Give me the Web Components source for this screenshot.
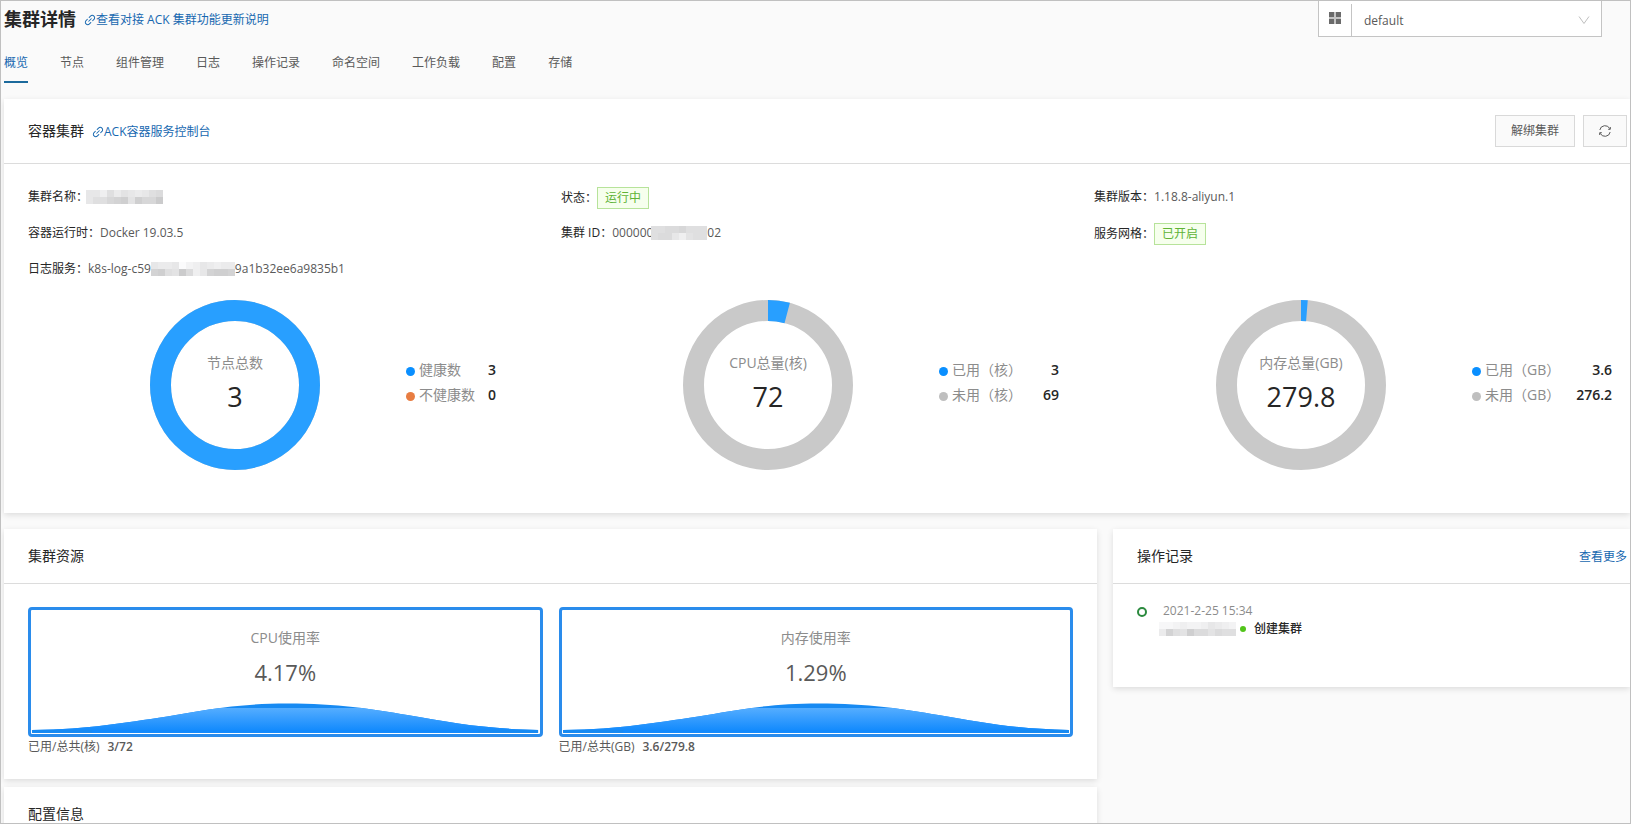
<!DOCTYPE html>
<html lang="zh-CN">
<head>
<meta charset="utf-8">
<title>集群详情</title>
<style>
  body {
    margin: 0;
    font-family: "Open Sans", "Noto Sans CJK SC", sans-serif;
    font-size: 12px;
    line-height: 20px;
    color: #595959;
    --ink: #262626;
    --link: #1768b0;
    --line: #dcdcdc;
    --blue: #289fff;
    --grey: #c9c9c9;
  }
</style>
</head>
<body>
<cluster-page></cluster-page>
<script>
const define = (name, css, html) => customElements.define(name, class extends HTMLElement {
  constructor() {
    super();
    this.attachShadow({ mode: 'open' });
  }
  connectedCallback() {
    const body = typeof html === 'function' ? html(this) : html;
    const template = document.createElement('template');
    template.innerHTML = `<style>*{box-sizing:border-box}${css}</style>${body}`;
    this.shadowRoot.replaceChildren(template.content.cloneNode(true));
  }
});

define('doc-link', `
  :host { display: inline-flex; padding-top: 2px; }
  a { display: inline-flex; align-items: center; color: var(--link); text-decoration: none; }
  svg { width: 12px; height: 12px; fill: currentColor; }
`, el => `
  <a href="#">${el.hasAttribute('plain') ? '' : `
    <svg viewBox="64 64 896 896" aria-hidden="true"><path d="M574 665.4a8.03 8.03 0 0 0-11.3 0L446.5 781.6c-53.8 53.8-144.6 59.5-204 0-59.5-59.5-53.8-150.2 0-204l116.2-116.2c3.1-3.1 3.1-8.2 0-11.3l-39.8-39.8a8.03 8.03 0 0 0-11.3 0L191.4 526.5c-84.6 84.6-84.6 221.5 0 306s221.5 84.6 306 0l116.2-116.2c3.1-3.1 3.1-8.2 0-11.3L574 665.4zm258.6-474c-84.6-84.6-221.5-84.6-306 0L410.3 307.6a8.03 8.03 0 0 0 0 11.3l39.7 39.7c3.1 3.1 8.2 3.1 11.3 0l116.2-116.2c53.8-53.8 144.6-59.5 204 0 59.5 59.5 53.8 150.2 0 204L665.3 562.6a8.03 8.03 0 0 0 0 11.3l39.8 39.8c3.1 3.1 8.2 3.1 11.3 0l116.2-116.2c84.5-84.6 84.5-221.5 0-306.1zM610.1 372.3a8.03 8.03 0 0 0-11.3 0L372.3 598.7a8.03 8.03 0 0 0 0 11.3l39.6 39.6c3.1 3.1 8.2 3.1 11.3 0l226.4-226.4c3.1-3.1 3.1-8.2 0-11.3l-39.5-39.6z"/></svg>`}<span><slot></slot></span></a>
`);

define('namespace-picker', `
  :host { display: flex; width: 284px; height: 36px; background: #fff; border: 1px solid #c4c4c4; border-top: 0; }
  label { display: flex; align-items: center; justify-content: center; width: 32px; padding-bottom: 1px; }
  label svg { width: 12px; height: 12px; fill: #6a6a6a; }
  .field { position: relative; flex: 1; margin-top: 3px; border-left: 1px solid #c4c4c4; }
  select { appearance: none; width: 100%; height: 100%; border: 0; padding: 2px 32px 0 12px; background: none; font: inherit; color: #595959; }
  .field svg { position: absolute; right: 11px; top: 10px; width: 12px; height: 12px; fill: none; stroke: #bfbfbf; pointer-events: none; }
`, `
  <label for="ns" aria-label="命名空间"><svg viewBox="0 0 12 12"><path d="M0 0h12v12H0z" fill="#c4c4c4"/><path d="M0 0h5v5H0zM7 0h5v5H7zM0 7h5v5H0zM7 7h5v5H7z"/></svg></label>
  <div class="field">
    <select id="ns"><option>default</option></select>
    <svg viewBox="0 0 12 12"><path d="M1 2.500 6 9.500 11 2.500"/></svg>
  </div>
`);

define('tab-bar', `
  :host { display: flex; gap: 32px; height: 40px; }
  a { line-height: 40px; color: inherit; text-decoration: none; }
  a.on { color: var(--link); box-shadow: inset 0 -2px #1c6a9c; }
`, el => el.getAttribute('tabs').split(' ')
  .map((t, i) => `<a href="#"${i ? '' : ' class="on" aria-current="page"'}>${t}</a>`).join(''));

define('panel-card', `
  :host { display: block; background: #fff; box-shadow: 0 2px 6px rgba(0,0,0,.12); }
  header { display: flex; align-items: center; gap: 8px; min-height: 54px; padding: 0 var(--pad-right, 24px) 0 24px; }
  :host([tall]) header { min-height: 64px; }
  h2 { margin: 0; font-size: 14px; font-weight: 400; color: var(--ink); }
  .extra { display: flex; gap: 8px; margin-left: auto; }
  .body { padding: 0 var(--pad-right, 24px) 0 24px; border-top: 1px solid var(--line); }
`, el => `
  <header><h2>${el.getAttribute('heading')}</h2><slot name="title"></slot><div class="extra"><slot name="extra"></slot></div></header>
  <div class="body"><slot></slot></div>
`);

define('tool-button', `
  :host { display: flex; }
  button { display: flex; align-items: center; height: 32px; padding: 0 15px; border: 1px solid #d9d9d9; background: #fafafa; font: inherit; color: #595959; }
`, el => `<button type="button" aria-label="${el.getAttribute('label')}"><slot></slot></button>`);

define('status-tag', `
  :host { display: inline-block; height: 22px; line-height: 20px; padding: 0 7px; border: 1px solid #b7e39a; background: #f6ffed; color: #5fb336; }
`, `<slot></slot>`);

define('info-item', `
  :host { display: flex; align-items: center; height: 36px; box-sizing: border-box; }
  :host([tagged]) { padding-top: 2px; }
  .label { color: var(--ink); }
  .value { display: flex; align-items: center; }
`, el => `<span class="label">${el.getAttribute('label')}：</span><span class="value"><slot></slot></span>`);

// Masked text: each row of the shades attribute is a string of hex digits, dark to light.
define('masked-text', `
  :host { display: inline-block; }
  svg { display: block; }
`, el => {
  const rows = el.getAttribute('shades').split(' ');
  const width = rows[0].length * 7;
  const cells = rows.map((row, y) => [...row].map((c, x) =>
    `<rect x="${x * 7}" y="${y * 7}" width="7" height="7" fill="rgb(${[0, 0, 1].map(d => 195 + parseInt(c, 16) * 4 + d).join()})"/>`).join('')).join('');
  return `<svg width="${width}" height="14" viewBox="0 0 ${width} 14" shape-rendering="crispEdges">${cells}</svg>`;
});

define('ring-chart', `
  :host { display: flex; align-items: center; gap: 86px; padding-left: 122px; }
  .ring { display: grid; place-items: center; width: 170px; height: 170px; }
  .ring > * { grid-area: 1 / 1; }
  svg { width: 170px; height: 170px; transform: rotate(-90deg); fill: none; stroke-width: 21; }
  .text { display: flex; flex-direction: column; align-items: center; font-size: 14px; color: #8c8c8c; padding-top: 4px; }
  .text b { font-size: 27px; line-height: 48px; font-weight: 400; color: var(--ink); }
  ul { list-style: none; margin: 0; padding: 0 0 6px; width: var(--legend); font-size: 14px; color: #8c8c8c; }
  li { display: flex; align-items: center; gap: 4px; line-height: 25px; white-space: nowrap; }
  li b { margin-left: auto; font-weight: 600; color: var(--ink); }
  i { width: 9px; height: 9px; margin-top: 4px; border-radius: 50%; }
`, el => {
  const legend = JSON.parse(el.getAttribute('legend'));
  const share = el.getAttribute('share');
  return `
  <div class="ring">
    <svg viewBox="0 0 170 170"><circle cx="85" cy="85" r="74.500" stroke="var(--grey)"/><circle cx="85" cy="85" r="74.500" stroke="var(--blue)" pathLength="100" stroke-dasharray="${share} 100"/></svg>
    <div class="text"><span>${el.getAttribute('label')}</span><b>${el.getAttribute('total')}</b></div>
  </div>
  <ul>${legend.map(([c, t, v]) => `<li><i style="background:${c}"></i><span>${t}</span><b>${v}</b></li>`).join('')}</ul>`;
});

define('usage-tile', `
  :host { display: block; }
  .box { display: flex; flex-direction: column; align-items: center; height: 130px; padding: 18px 1px 1px; border: 3px solid #2a8cec; border-radius: 4px; }
  .name { font-size: 14px; color: #8c8c8c; line-height: 20px; }
  .rate { font-size: 22px; line-height: 48px; margin-bottom: auto; }
  svg { display: block; width: 100%; height: 30px; flex: none; }
  .note { display: flex; gap: 8px; }
  .note b { font-weight: 600; }
`, el => `
  <div class="box">
    <span class="name">${el.getAttribute('name')}</span>
    <span class="rate">${el.getAttribute('rate')}</span>
    <svg viewBox="0 0 506 30" preserveAspectRatio="none" aria-hidden="true">
      <defs>
        <linearGradient id="g" x1="0" y1="0" x2="0" y2="1"><stop offset="0" stop-color="#55adff"/><stop offset="1" stop-color="#148bfd"/></linearGradient>
        <clipPath id="c"><path id="w" d="M0 27C60 26 90 20 135 13.500C170 7.500 205 .5 255 .5C305 .5 340 6 375 12C420 20 455 26 506 27V30H0Z"/></clipPath>
      </defs>
      <g clip-path="url(#c)"><path fill="#178af2" d="M0 0h506v30H0z"/><path fill="url(#g)" d="M0 5h506v22H0z"/><path fill="#148bfd" d="M60 27h386v3H60z"/></g>
    </svg>
  </div>
  <div class="note"><span>${el.getAttribute('note')}</span><b>${el.getAttribute('amount')}</b></div>
`);

define('log-entry', `
  :host { display: grid; grid-template-columns: 10px auto; column-gap: 12px; }
  .mark { width: 10px; height: 10px; margin-top: 5px; border: 2px solid #2b8a3e; border-radius: 50%; }
  time { display: block; padding-left: 4px; line-height: 18px; color: #8c8c8c; }
  .line { display: flex; align-items: center; line-height: 18px; }
  .dot { width: 6px; height: 6px; margin: 0 8px 0 4px; border-radius: 50%; background: #52c41a; }
  b { font-weight: 500; color: var(--ink); }
`, el => `
  <span class="mark"></span>
  <div><time>${el.getAttribute('time')}</time><div class="line"><slot></slot><span class="dot"></span><b>${el.getAttribute('action')}</b></div></div>
`);

define('cluster-page', `
  :host { display: block; height: 100vh; overflow: hidden; box-sizing: border-box; border: 1px solid #c0c0c0; background: #fafafa; }
  .top { display: flex; align-items: center; justify-content: space-between; height: 36px; padding: 0 28px 0 3px; margin-bottom: 6px; }
  .heading { display: flex; align-items: center; gap: 8px; padding-bottom: 1px; }
  h1 { margin: 0; font-size: 18px; font-weight: 700; line-height: 32px; color: var(--ink); }
  tab-bar { padding-left: 3px; margin-bottom: 16px; }
  main { padding-left: 3px; }
  .wide { --pad-right: 3px; margin-bottom: 16px; }
  .info, .charts { display: grid; grid-template-columns: repeat(3, 1fr); }
  .info { padding: 15px 0 13px; }
  .charts { padding-bottom: 43px; }
  .cover { margin-left: -2px; }
  .lower { display: grid; grid-template-columns: 1093fr 517fr; gap: 16px; align-items: start; }
  .left { display: grid; gap: 8px; }
  .tiles { display: grid; grid-template-columns: 1fr 1fr; gap: 16px; padding: 23px 0 22px; }
  .records { --pad-right: 3px; }
  log-entry { padding: 18px 0 49px; }
  .refresh { width: 12px; height: 12px; fill: none; stroke: #595959; }
`, `
  <div class="top">
    <div class="heading"><h1>集群详情</h1><doc-link>查看对接 ACK 集群功能更新说明</doc-link></div>
    <namespace-picker></namespace-picker>
  </div>
  <tab-bar role="navigation" tabs="概览 节点 组件管理 日志 操作记录 命名空间 工作负载 配置 存储"></tab-bar>
  <main>
    <panel-card class="wide" tall heading="容器集群">
      <doc-link slot="title">ACK容器服务控制台</doc-link>
      <tool-button slot="extra" label="解绑集群">解绑集群</tool-button>
      <tool-button slot="extra" label="刷新"><svg class="refresh" viewBox="0 0 12 12"><path d="M.8 5A5.300 5.300 0 0 1 10.800 3.700M11.200 7A5.300 5.300 0 0 1 1.200 8.300M11.300 2V4.300H9.200M.7 10V7.700H2.800"/></svg></tool-button>
      <div class="info">
        <info-item label="集群名称"><masked-text class="cover" shades="99b7a89a976 97754383552"></masked-text></info-item>
        <info-item tagged label="状态"><status-tag>运行中</status-tag></info-item>
        <info-item label="集群版本">1.18.8-aliyun.1</info-item>
        <info-item label="容器运行时">Docker 19.03.5</info-item>
        <info-item label="集群 ID">000000<masked-text class="cover" shades="77665777 7669b877"></masked-text>02</info-item>
        <info-item tagged label="服务网格"><status-tag>已开启</status-tag></info-item>
        <info-item label="日志服务">k8s-log-c59<masked-text shades="9aa9ecb9abaa 437826b94334"></masked-text>9a1b32ee6a9835b1</info-item>
      </div>
      <div class="charts">
        <ring-chart label="节点总数" total="3" share="100" style="--legend:90px" legend='[["#0a8fff","健康数","3"],["#e87d42","不健康数","0"]]'></ring-chart>
        <ring-chart label="CPU总量(核)" total="72" share="4.17" style="--legend:120px" legend='[["#0a8fff","已用（核）","3"],["#bfbfbf","未用（核）","69"]]'></ring-chart>
        <ring-chart label="内存总量(GB)" total="279.8" share="1.29" style="--legend:140px" legend='[["#0a8fff","已用（GB）","3.6"],["#bfbfbf","未用（GB）","276.2"]]'></ring-chart>
      </div>
    </panel-card>
    <div class="lower">
      <div class="left">
        <panel-card heading="集群资源">
          <div class="tiles">
            <usage-tile name="CPU使用率" rate="4.17%" note="已用/总共(核)" amount="3/72"></usage-tile>
            <usage-tile name="内存使用率" rate="1.29%" note="已用/总共(GB)" amount="3.6/279.8"></usage-tile>
          </div>
        </panel-card>
        <panel-card heading="配置信息"></panel-card>
      </div>
      <panel-card class="records" heading="操作记录">
        <doc-link plain slot="extra">查看更多</doc-link>
        <log-entry time="2021-2-25 15:34" action="创建集群"><masked-text shades="ddcbccb9abc a4783668677"></masked-text></log-entry>
      </panel-card>
    </div>
  </main>
`);
</script>
</body>
</html>
